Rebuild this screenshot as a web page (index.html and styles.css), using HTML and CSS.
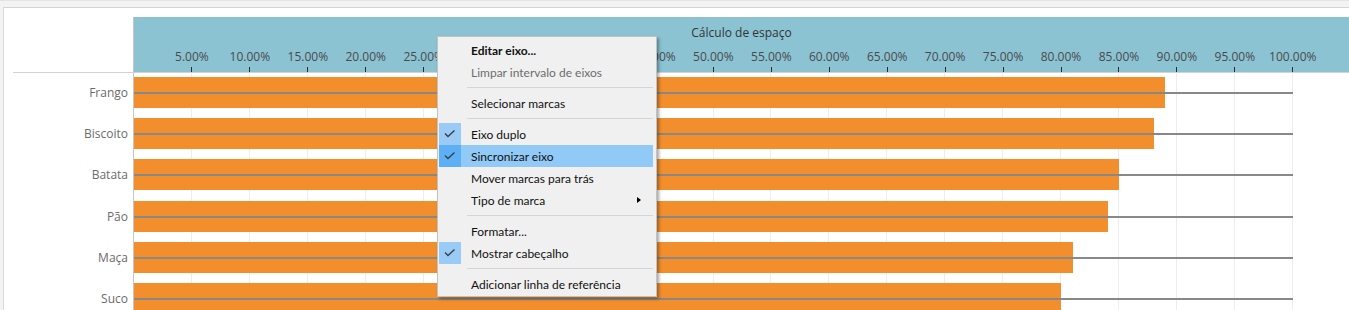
FILE: index.html
```html
<!DOCTYPE html>
<html lang="pt">
<head>
  <meta charset="UTF-8">
  <title>Cálculo de espaço</title>
  <link rel="stylesheet" href="styles.css">
</head>
<body>
  <div class="panel">
    <div class="head">
      <div class="corner"></div>
      <div class="axis">
        <div class="axis-title">Cálculo de espaço</div>
        <div class="ticks">
          <div class="tick">5.00%</div>
          <div class="tick">10.00%</div>
          <div class="tick">15.00%</div>
          <div class="tick">20.00%</div>
          <div class="tick">25.00%</div>
          <div class="tick">30.00%</div>
          <div class="tick">35.00%</div>
          <div class="tick">40.00%</div>
          <div class="tick">45.00%</div>
          <div class="tick">50.00%</div>
          <div class="tick">55.00%</div>
          <div class="tick">60.00%</div>
          <div class="tick">65.00%</div>
          <div class="tick">70.00%</div>
          <div class="tick">75.00%</div>
          <div class="tick">80.00%</div>
          <div class="tick">85.00%</div>
          <div class="tick">90.00%</div>
          <div class="tick">95.00%</div>
          <div class="tick">100.00%</div>
        </div>
      </div>
    </div>

    <div class="row">
      <div class="row-label">Frango</div>
      <div class="track"><div class="scale"><div class="bar" style="width: 88.95%;"></div><div class="ref"></div></div></div>
    </div>
    <div class="row">
      <div class="row-label">Biscoito</div>
      <div class="track"><div class="scale"><div class="bar" style="width: 88%;"></div><div class="ref"></div></div></div>
    </div>
    <div class="row">
      <div class="row-label">Batata</div>
      <div class="track"><div class="scale"><div class="bar" style="width: 85%;"></div><div class="ref"></div></div></div>
    </div>
    <div class="row">
      <div class="row-label">Pão</div>
      <div class="track"><div class="scale"><div class="bar" style="width: 84%;"></div><div class="ref"></div></div></div>
    </div>
    <div class="row">
      <div class="row-label">Maça</div>
      <div class="track"><div class="scale"><div class="bar" style="width: 81%;"></div><div class="ref"></div></div></div>
    </div>
    <div class="row">
      <div class="row-label">Suco</div>
      <div class="track"><div class="scale"><div class="bar" style="width: 80%;"></div><div class="ref"></div></div></div>
    </div>
  </div>

  <!-- context menu on the axis header -->
  <div class="menu">
    <div class="item bold"><span class="check"></span>Editar eixo...</div>
    <div class="item disabled"><span class="check"></span>Limpar intervalo de eixos</div>
    <div class="sep"></div>
    <div class="item"><span class="check"></span>Selecionar marcas</div>
    <div class="sep"></div>
    <div class="item"><span class="check on"><svg width="22" height="22" viewBox="0 0 22 22"><polyline points="6,10.5 9,13.5 15.5,7.5" /></svg></span>Eixo duplo</div>
    <div class="item active"><span class="check on"><svg width="22" height="22" viewBox="0 0 22 22"><polyline points="6,10.5 9,13.5 15.5,7.5" /></svg></span>Sincronizar eixo</div>
    <div class="item"><span class="check"></span>Mover marcas para trás</div>
    <div class="item"><span class="check"></span>Tipo de marca<span class="arrow"></span></div>
    <div class="sep"></div>
    <div class="item"><span class="check"></span>Formatar...</div>
    <div class="item"><span class="check on"><svg width="22" height="22" viewBox="0 0 22 22"><polyline points="6,10.5 9,13.5 15.5,7.5" /></svg></span>Mostrar cabeçalho</div>
    <div class="sep"></div>
    <div class="item"><span class="check"></span>Adicionar linha de referência</div>
  </div>
</body>
</html>
```

FILE: styles.css
```css
body {
  margin: 0;
  height: 309px;
  overflow: hidden;
  background-color: #f3f3f3;
  border-top: 1px solid #e4e4e4;
  font-family: 'Open Sans', 'Noto Sans', sans-serif;
  font-size: 12px;
}

.panel {
  margin: 6px 0 0 3px;
  height: 293px;
  overflow: hidden;
  background-color: #fff;
  border-top: 1px solid #d4d4d4;
  border-left: 1px solid #dadada;
  padding-top: 9px;
}

.head {
  display: flex;
  height: 55px;
  margin-left: 9px;
  border-bottom: 1px solid #d3d3d3;
}

.corner {
  width: 120px;
}

.axis {
  flex: 1;
  background-color: #8bc3d3;
  border-left: 1px solid #c6c6c6;
  padding-top: 8px;
}

.axis-title {
  text-align: center;
  line-height: 16px;
  color: #333;
}

.ticks {
  display: grid;
  grid-template-columns: repeat(20, 57.95px);
  margin: 8px 0 0 28.97px;
}

.tick {
  text-align: center;
  line-height: 16px;
  color: #4a4a4a;
  white-space: nowrap;
}

.tick::after {
  content: '';
  display: block;
  width: 1px;
  height: 5px;
  margin: 2px auto 0;
  background-color: #2b2b2b;
}

.row {
  display: flex;
  height: 41.2px;
}

.row-label {
  width: 129px;
  box-sizing: border-box;
  padding: 4px 5px 0 0;
  line-height: 31px;
  text-align: right;
  color: #6b6b6b;
}

.track {
  flex: 1;
  border-left: 1px solid #c6c6c6;
  padding-top: 4px;
  background-image: repeating-linear-gradient(to right, transparent 0, transparent 56.95px, #ededed 56.95px, #ededed 57.95px);
  background-size: 1159px 100%;
  background-repeat: no-repeat;
}

.scale {
  position: relative;
  width: 1159px;
  height: 31px;
}

.bar {
  height: 100%;
  background-color: #f28e2c;
}

.ref {
  position: absolute;
  left: 0;
  right: 0;
  top: 15px;
  height: 2px;
  background-color: #888;
}

/* menu */
.menu {
  position: absolute;
  left: 437px;
  top: 36px;
  width: 214px;
  padding: 2px 3px 1px 1px;
  background-color: #f0f0f0;
  border: 1px solid #c2c2c2;
  box-shadow: 2px 2px 3px rgba(0, 0, 0, 0.35);
  font-family: 'Lato', 'Open Sans', sans-serif;
  font-size: 12px;
  color: #111;
}

.item {
  display: flex;
  align-items: center;
  height: 22px;
  white-space: nowrap;
}

.item.bold {
  font-weight: bold;
}

.item.disabled {
  color: #6d6d6d;
}

.item.active {
  background-color: #91c9f7;
}

.check {
  width: 22px;
  height: 22px;
  margin-right: 10px;
  flex: none;
}

.check.on {
  background-color: #99cbf6;
}

.item.active .check.on {
  background-color: #5eb0f6;
}

.check svg {
  display: block;
}

.check polyline {
  fill: none;
  stroke: #3a3f46;
  stroke-width: 1.4;
}

.arrow {
  margin-left: auto;
  margin-right: 12px;
  width: 0;
  height: 0;
  border-top: 3.5px solid transparent;
  border-bottom: 3.5px solid transparent;
  border-left: 4px solid #000;
}

.sep {
  height: 1px;
  margin: 4px 0 4px 28px;
  background-color: #d5d5d5;
}
```
